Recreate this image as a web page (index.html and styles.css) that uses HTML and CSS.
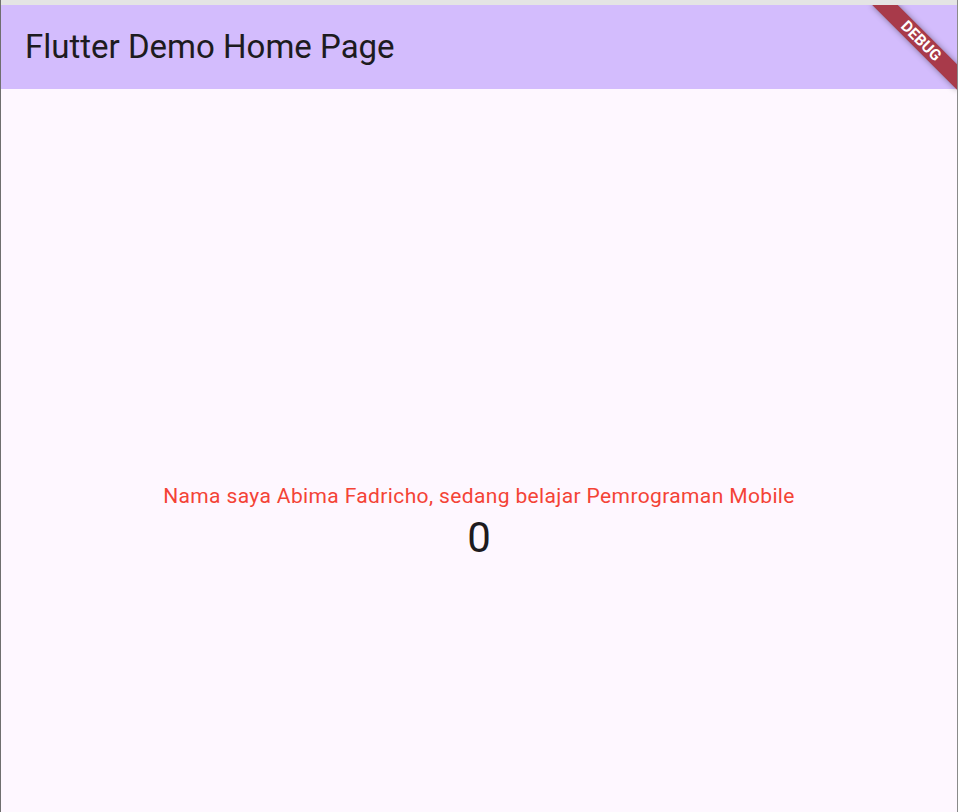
FILE: index.html
```html
<!DOCTYPE html>
<html>
<head>
<meta charset="utf-8">
<link rel="stylesheet" href="styles.css">
</head>
<body>
<div class="frame">
  <div class="topstrip"></div>
  <div class="app">
    <header class="appbar">
      <h1 class="title">Flutter Demo Home Page</h1>
    </header>
    <main class="content">
      <div class="center">
        <p class="message">Nama saya Abima Fadricho, sedang belajar Pemrograman Mobile</p>
        <p class="counter">0</p>
      </div>
    </main>
    <div class="banner"><span>DEBUG</span></div>
  </div>
</div>
</body>
</html>
```
FILE: styles.css
```css
html, body {
  margin: 0;
  padding: 0;
  width: 958px;
  height: 812px;
  overflow: hidden;
  background: #e6e6e6;
}

.frame {
  height: 812px;
  border-left: 1px solid #6f6f6f;
  border-right: 1px solid #8a8a8a;
  box-sizing: border-box;
  display: flex;
  flex-direction: column;
}

.topstrip {
  height: 5px;
  background: #e4e4e4;
  flex: none;
}

.app {
  position: relative;
  flex: 1;
  overflow: hidden;
  background: #fef7ff;
  font-family: Roboto, "Liberation Sans", sans-serif;
}

.appbar {
  height: 84px;
  background: #d3bcfd;
  display: flex;
  align-items: center;
  padding-left: 24px;
}

.title {
  margin: 0;
  font-size: 33px;
  font-weight: 400;
  color: #1d1b20;
  line-height: 42px;
}

.content {
  height: 868px;
  display: flex;
  align-items: center;
  justify-content: center;
}

.center {
  display: flex;
  flex-direction: column;
  align-items: center;
}

.message {
  margin: 0;
  font-size: 21px;
  line-height: 30px;
  color: #f44336;
  letter-spacing: 0.37px;
}

.counter {
  margin: 0;
  font-size: 42px;
  line-height: 54px;
  color: #1d1b20;
}

.banner {
  position: absolute;
  top: 27px;
  right: -24px;
  width: 120px;
  height: 18px;
  transform: rotate(45deg);
  background: #a83a4a;
  box-shadow: 0 0 6px rgba(0, 0, 0, 0.4);
  display: flex;
  align-items: center;
  justify-content: center;
}

.banner span {
  color: #ffffff;
  font-family: Roboto, "Liberation Sans", sans-serif;
  font-weight: 700;
  font-size: 15.5px;
  line-height: 15px;
  letter-spacing: 0;
}
```
